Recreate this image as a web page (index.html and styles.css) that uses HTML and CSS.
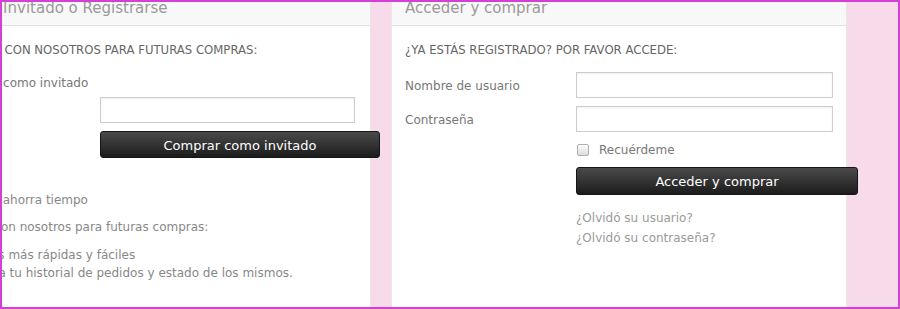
FILE: index.html
```html
<!DOCTYPE html>
<html lang="es">
<head>
  <meta charset="UTF-8" />
  <title>Comprar - Acceso</title>
  <link rel="stylesheet" href="styles.css">
</head>
<body>
  <div class="frame">
    <div class="columns">

      <div class="panel">
        <div class="panel-head">Compra - Invitado o Registrarse</div>
        <div class="panel-body">
          <p class="section-title">Regístrate con nosotros para futuras compras:</p>
          <div class="guest-label"><span class="radio"></span>Comprar como invitado</div>
          <div class="field-offset">
            <input type="text" class="text-input guest-input" title="Email" />
          </div>
          <button class="dark-btn guest-btn">Comprar como invitado</button>
          <p class="benefit-title">Registrarse ahorra tiempo</p>
          <p class="benefit-sub">Regístrate con nosotros para futuras compras:</p>
          <ul class="benefits">
            <li>Compras más rápidas y fáciles</li>
            <li>Accede a tu historial de pedidos y estado de los mismos.</li>
          </ul>
        </div>
      </div>

      <div class="panel">
        <div class="panel-head">Acceder y comprar</div>
        <div class="panel-body">
          <p class="section-title">¿Ya estás registrado? Por favor accede:</p>
          <div class="form-row">
            <label for="username">Nombre de usuario</label>
            <input type="text" id="username" class="text-input" />
          </div>
          <div class="form-row">
            <label for="password">Contraseña</label>
            <input type="password" id="password" class="text-input" />
          </div>
          <div class="remember"><span class="check"></span>Recuérdeme</div>
          <button class="dark-btn login-btn">Acceder y comprar</button>
          <div class="links">
            <a href="#">¿Olvidó su usuario?</a>
            <a href="#">¿Olvidó su contraseña?</a>
          </div>
        </div>
      </div>

    </div>
  </div>
</body>
</html>
```

FILE: styles.css
```css
body { margin:0; font-family:'DejaVu Sans', Verdana, sans-serif; font-size:12px; color:#777; }
.frame { height:309px; box-sizing:border-box; border:2px solid #d43fd4; background:#f7dbea; overflow:hidden; }
.columns { display:flex; gap:20px; margin:-12px 0 0 -87px; }
.panel { width:456px; height:400px; flex-shrink:0; box-sizing:border-box; background:#fff; border:1px solid #e8e8e8; border-top:none; }
.panel-head { background:#f8f8f8; border-bottom:1px solid #e2e2e2; padding:8px 13px 7px; font-size:15px; line-height:20px; color:#9a9a9a; }
.panel-body { padding:13px 0 0 13px; }
.section-title { margin:0 0 12px; padding-top:1px; font-size:11.7px; line-height:20px; color:#666; text-transform:uppercase; }

/* login form */
.form-row { display:grid; grid-template-columns:171px 257px; align-items:center; margin-bottom:8px; }
.form-row label { line-height:20px; padding-top:2px; }
.text-input { display:block; width:257px; height:26px; box-sizing:border-box; margin:0; padding:3px 6px; border:1px solid #cdcdcd; background:#fff; box-shadow:inset 0 1px 2px rgba(0,0,0,0.07); font-family:inherit; }
.remember { display:flex; align-items:center; height:20px; margin:0 0 7px 171px; color:#777; }
.remember .check { margin-top:-1px; }
.check { width:10px; height:10px; margin:0 10px 0 1px; border:1px solid #b0b0b0; border-radius:2px; background:linear-gradient(#fdfdfd,#dcdcdc); }
.dark-btn { display:block; margin-left:171px; width:282px; border:1px solid #161616; border-radius:3px; background:linear-gradient(#4a4a4a,#1c1c1c); color:#fff; font-family:'DejaVu Sans', Verdana, sans-serif; font-size:13px; padding:1px 0 0; cursor:pointer; }
.login-btn { height:28px; }
.links { margin:13px 0 0 171px; }
.links a { display:block; line-height:20px; color:#9a9a9a; text-decoration:none; }

/* guest column */
.guest-label { display:flex; align-items:center; line-height:20px; padding-top:1px; }
.radio { width:11px; height:11px; margin-right:5px; border:1px solid #aaa; border-radius:50%; }
.field-offset { margin:4px 0 0 171px; }
.guest-input { width:255px; }
.guest-btn { height:27px; width:280px; margin-top:8px; }
.benefit-title { margin:31px 0 0; padding:1px 0 0 2px; line-height:20px; color:#888; }
.benefit-sub { margin:6px 0 0; padding-top:1px; line-height:20px; color:#888; }
.benefits { margin:9px 0 0; padding-left:22px; line-height:18px; color:#888; }
```
